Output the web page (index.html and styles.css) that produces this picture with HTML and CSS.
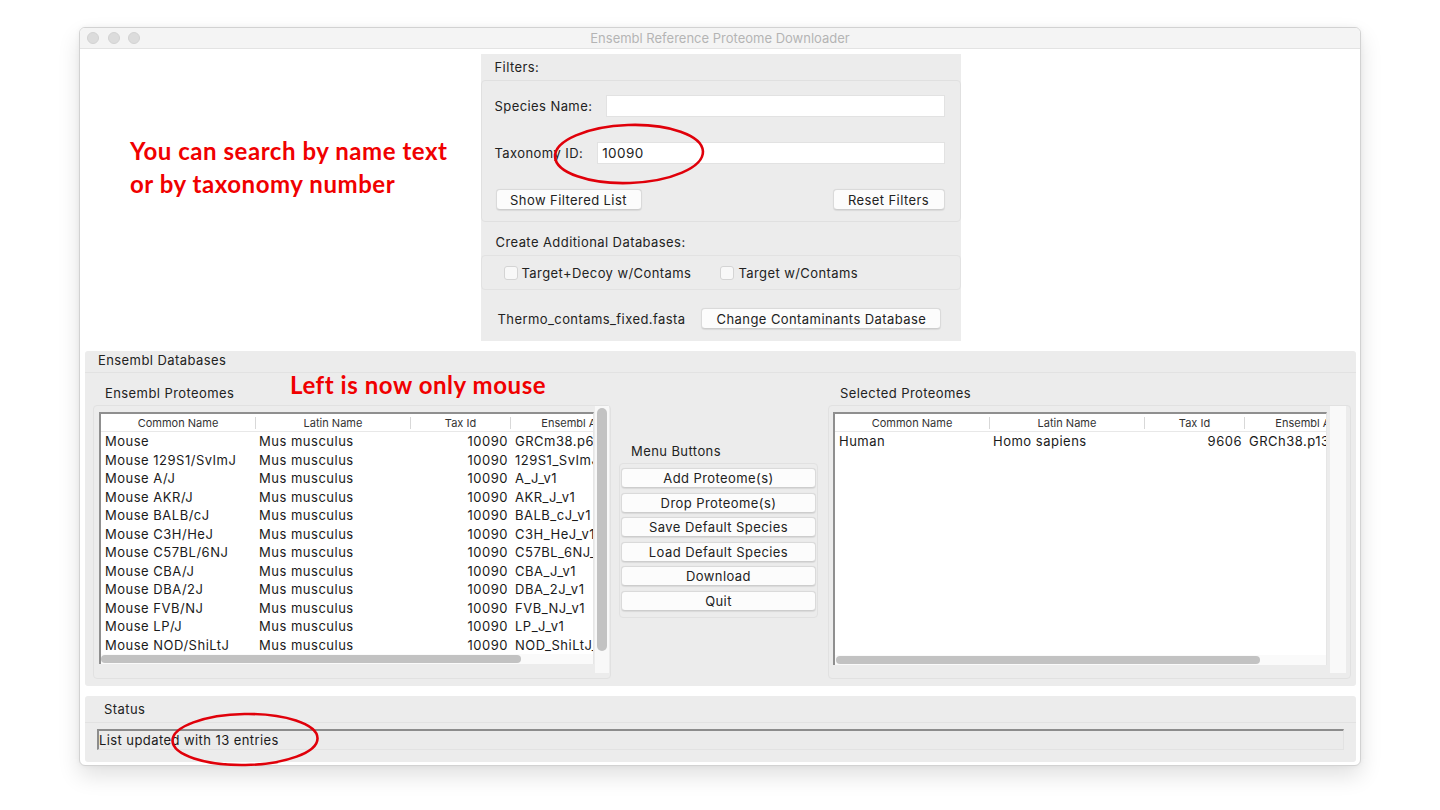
FILE: index.html
```html
<!DOCTYPE html>
<html>
<head>
<meta charset="utf-8">
<title>Ensembl Reference Proteome Downloader</title>
<link rel="stylesheet" href="styles.css">
</head>
<body>
<div class="window">
  <div class="titlebar">
    <div class="lights"><span></span><span></span><span></span></div>
    <div class="title">Ensembl Reference Proteome Downloader</div>
    <div></div>
  </div>
  <div class="content">
    <div class="top">
      <div class="note note-search">You can search by name text<br>or by taxonomy number</div>
      <div class="filters">
        <div class="f-head">Filters:</div>
        <div class="f-box">
          <div class="f-row"><span>Species Name:</span><div class="entry"></div></div>
          <div class="f-row f-row2"><span>Taxonomy ID:</span><div class="entry">10090</div></div>
          <div class="f-btns"><div class="btn btn-show">Show Filtered List</div><div class="btn btn-reset">Reset Filters</div></div>
        </div>
        <div class="f-sub">Create Additional Databases:</div>
        <div class="f-checks">
          <label class="chk"><span class="box"></span>Target+Decoy w/Contams</label>
          <label class="chk chk2"><span class="box"></span>Target w/Contams</label>
        </div>
        <div class="f-contam"><span>Thermo_contams_fixed.fasta</span><div class="btn btn-contam">Change Contaminants Database</div></div>
      </div>
      <div></div>
    </div>

    <div class="frame dbs">
      <div class="fr-head dbs-head">Ensembl Databases</div>
      <div class="dbs-body">
        <div class="group g-left">
          <div class="g-label-row"><span class="g-label g-label-left">Ensembl Proteomes</span><span class="note note-left">Left is now only mouse</span></div>
          <div class="g-frame">
            <div class="tree">
              <div class="thead"><div class="th">Common Name</div><div class="th">Latin Name</div><div class="th">Tax Id</div><div class="th">Ensembl Assembly</div></div>
              <div class="tbody">
                <div class="tr"><span>Mouse</span><span>Mus musculus</span><span class="num">10090</span><span>GRCm38.p6</span></div>
                <div class="tr"><span>Mouse 129S1/SvImJ</span><span>Mus musculus</span><span class="num">10090</span><span>129S1_SvImJ_v1</span></div>
                <div class="tr"><span>Mouse A/J</span><span>Mus musculus</span><span class="num">10090</span><span>A_J_v1</span></div>
                <div class="tr"><span>Mouse AKR/J</span><span>Mus musculus</span><span class="num">10090</span><span>AKR_J_v1</span></div>
                <div class="tr"><span>Mouse BALB/cJ</span><span>Mus musculus</span><span class="num">10090</span><span>BALB_cJ_v1</span></div>
                <div class="tr"><span>Mouse C3H/HeJ</span><span>Mus musculus</span><span class="num">10090</span><span>C3H_HeJ_v1</span></div>
                <div class="tr"><span>Mouse C57BL/6NJ</span><span>Mus musculus</span><span class="num">10090</span><span>C57BL_6NJ_v1</span></div>
                <div class="tr"><span>Mouse CBA/J</span><span>Mus musculus</span><span class="num">10090</span><span>CBA_J_v1</span></div>
                <div class="tr"><span>Mouse DBA/2J</span><span>Mus musculus</span><span class="num">10090</span><span>DBA_2J_v1</span></div>
                <div class="tr"><span>Mouse FVB/NJ</span><span>Mus musculus</span><span class="num">10090</span><span>FVB_NJ_v1</span></div>
                <div class="tr"><span>Mouse LP/J</span><span>Mus musculus</span><span class="num">10090</span><span>LP_J_v1</span></div>
                <div class="tr"><span>Mouse NOD/ShiLtJ</span><span>Mus musculus</span><span class="num">10090</span><span>NOD_ShiLtJ_v1</span></div>
              </div>
              <div class="hscroll"><div class="hthumb hthumb-left"></div></div>
            </div>
            <div class="vscroll vscroll-left"><div class="vthumb"></div></div>
          </div>
        </div>

        <div class="group g-mid">
          <div class="g-label mid-label">Menu Buttons</div>
          <div class="g-frame mid-frame">
            <div class="btn mbtn">Add Proteome(s)</div>
            <div class="btn mbtn">Drop Proteome(s)</div>
            <div class="btn mbtn">Save Default Species</div>
            <div class="btn mbtn">Load Default Species</div>
            <div class="btn mbtn">Download</div>
            <div class="btn mbtn">Quit</div>
          </div>
        </div>

        <div class="group g-right">
          <div class="g-label-row"><span class="g-label">Selected Proteomes</span></div>
          <div class="g-frame right-frame">
            <div class="tree tree-right">
              <div class="thead"><div class="th">Common Name</div><div class="th">Latin Name</div><div class="th">Tax Id</div><div class="th">Ensembl Assembly</div></div>
              <div class="tbody">
                <div class="tr"><span>Human</span><span>Homo sapiens</span><span class="num">9606</span><span>GRCh38.p13</span></div>
              </div>
              <div class="hscroll"><div class="hthumb hthumb-right"></div></div>
            </div>
            <div class="vscroll vscroll-right"></div>
          </div>
        </div>
      </div>
    </div>

    <div class="frame status">
      <div class="fr-head status-head">Status</div>
      <div class="status-body">
        <div class="status-entry">List updated with 13 entries</div>
      </div>
    </div>
  </div>
</div>

<svg class="marks" width="1440" height="810" viewBox="0 0 1440 810">
  <ellipse cx="629" cy="154" rx="74" ry="29" transform="rotate(-2 629 154)"/>
  <ellipse cx="245" cy="739.5" rx="72.5" ry="25.5" transform="rotate(-1 245 739)"/>
</svg>
</body>
</html>
```

FILE: styles.css
```css
* { box-sizing: border-box; }
html, body { margin: 0; padding: 0; }
body {
  width: 1440px;
  height: 810px;
  background: #fff;
  position: relative;
  overflow: hidden;
  font-family: Inter, "Liberation Sans", Arial, sans-serif;
  font-size: 13px;
  letter-spacing: 0.42px;
  color: #222;
}

.window {
  margin: 27px 0 0 79px;
  width: 1282px;
  height: 739px;
  border: 1px solid #d2d2d2;
  border-radius: 6px;
  background: #fff;
  box-shadow: 0 10px 22px rgba(0,0,0,0.12), 0 0 5px rgba(0,0,0,0.05);
  overflow: hidden;
  display: flex;
  flex-direction: column;
}

.titlebar {
  height: 21px;
  flex: none;
  background: #f4f4f4;
  border-bottom: 1px solid #e3e3e3;
  display: grid;
  grid-template-columns: 1fr auto 1fr;
  align-items: center;
}
.lights { display: flex; gap: 8.5px; padding-left: 7px; }
.lights span {
  width: 12px; height: 12px; border-radius: 50%;
  background: #dcdcdc;
  border: 0.5px solid #d2d2d2;
}
.title { color: #b4b4b4; font-size: 13px; letter-spacing: 0; }

.content {
  flex: 1;
  padding: 5px 4px 3px 5px;
  display: flex;
  flex-direction: column;
}

.top {
  display: grid;
  grid-template-columns: 1fr 480px 1fr;
}

.note {
  font-family: Lato, "Liberation Sans", sans-serif;
  font-weight: 700;
  color: #f00000;
  font-size: 24px;
  letter-spacing: 0.55px;
}
.note-search {
  padding: 80px 0 0 45px;
  line-height: 33px;
}

/* filters panel */
.filters {
  height: 287px;
  background: #ececec;
  display: flex;
  flex-direction: column;
}
.f-head { height: 26px; line-height: 26px; padding-left: 14px; }
.f-box {
  height: 142px;
  border: 1px solid #e0e0e0;
  border-radius: 4px;
  padding: 14px 15px 0 13px;
}
.f-row { display: flex; align-items: center; gap: 14px; height: 22px; }
.f-row2 { margin-top: 25px; }
.entry {
  flex: 1;
  height: 22px;
  background: #fff;
  border: 1px solid #e2e2e2;
  padding: 0 4px;
  line-height: 20px;
  font-size: 13.5px;
}
.f-btns {
  margin-top: 25px;
  display: flex;
  justify-content: space-between;
  padding-left: 1px;
}
.btn {
  height: 21px;
  line-height: 20px;
  background: #fcfcfc;
  border: 1px solid #dadada;
  border-bottom-color: #cdcdcd;
  border-radius: 4px;
  box-shadow: 0 0.5px 1px rgba(0,0,0,0.08);
  text-align: center;
  color: #222;
}
.btn-show { width: 146px; }
.btn-reset { width: 112px; }
.f-sub { height: 33px; padding: 6px 0 0 15px; display: flex; align-items: center; }
.f-checks {
  height: 35px;
  border: 1px solid #e2e2e2;
  border-radius: 4px;
  display: flex;
  align-items: center;
  padding-left: 22px;
}
.chk { display: flex; align-items: center; gap: 4px; }
.chk2 { margin-left: 29px; }
.box {
  width: 14px; height: 14px;
  background: #f8f8f8;
  border: 1px solid #d4d4d4;
  border-radius: 3px;
}
.f-contam {
  flex: 1;
  display: flex;
  align-items: center;
  padding: 6px 0 0 17px;
  gap: 16px;
}
.btn-contam { width: 240px; }

/* frames */
.frame {
  background: #ececec;
  border-radius: 3px;
}
.dbs { margin-top: 10px; height: 335px; display: flex; flex-direction: column; }
.fr-head { height: 21px; line-height: 19px; }
.dbs-head { padding-left: 13px; }
.dbs-body {
  flex: 1;
  border-top: 1px solid #e2e2e2;
  display: flex;
  align-items: flex-start;
  padding-left: 8px;
}
.group { display: flex; flex-direction: column; }
.g-label-row { height: 32px; display: flex; align-items: flex-start; }
.g-label { margin-top: 12px; line-height: 16px; padding-left: 12px; white-space: nowrap; }
.g-label-left { width: 197px; }
.note-left { margin: -2px 0 0 0; line-height: 28px; white-space: nowrap; }
.g-frame {
  border: 1px solid #e1e1e1;
  border-radius: 4px;
  display: flex;
  align-items: flex-start;
}
.g-left .g-frame { width: 518px; height: 274px; padding-left: 5px; }

.tree {
  width: 495px;
  height: 252px;
  margin-top: 6px;
  background: #fff;
  border-top: 2px solid #8f8f8f;
  border-left: 2px solid #8f8f8f;
  border-right: 1px solid #e6e6e6;
  display: flex;
  flex-direction: column;
  overflow: hidden;
}
.thead {
  height: 18px;
  flex: none;
  display: grid;
  grid-template-columns: 155px 155px 100px 160px;
  padding: 3px 0;
  border-bottom: 1px solid #e8e8e8;
  background: #fff;
}
.th {
  font-size: 11px;
  line-height: 12px;
  letter-spacing: 0;
  text-align: center;
  color: #333;
  border-right: 1px solid #d8d8d8;
  white-space: nowrap;
}
.tbody { flex: 1; overflow: hidden; }
.tr {
  height: 18.5px;
  display: grid;
  grid-template-columns: 155px 155px 100px 160px;
  align-items: center;
  white-space: nowrap;
  color: #1a1a1a;
  letter-spacing: 0.5px;
}
.tr span { padding-left: 3px; overflow: hidden; }
.tr span:first-child { padding-left: 4px; }
.tr .num { text-align: right; padding: 0 3px 0 0; }
.tr span:last-child { padding-left: 4px; }

.hscroll {
  height: 10px;
  flex: none;
  background: #fafafa;
  padding: 1px 0 1px 0;
}
.hthumb { height: 8px; border-radius: 4px; background: #c2c2c2; }
.hthumb-left { width: 420px; }
.hthumb-right { width: 424px; margin-left: 1px; }

.vscroll {
  width: 14px;
  height: 267px;
  margin-left: 1px;
  background: #f8f8f8;
  padding: 2px 2px 0 2px;
}
.vthumb { height: 243px; border-radius: 5px; background: #c2c2c2; }

.g-mid { margin-left: 8px; margin-top: 70px; }
.mid-label { margin: 0 0 4px 0; padding-left: 12px; }
.mid-frame {
  width: 199px;
  flex-direction: column;
  gap: 4.5px;
  padding: 4px 1px 6px 1px;
}
.mbtn { width: 195px; height: 20px; line-height: 19px; }

.g-right { margin-left: 10px; }
.right-frame { width: 523px; height: 274px; padding-left: 4px; }
.tree-right { width: 494px; height: 253px; }
.vscroll-right { width: 16px; margin-left: 3px; background: #f9f9f9; }

/* status */
.status { margin-top: 10px; height: 66px; display: flex; flex-direction: column; }
.status-head { height: 26px; line-height: 26px; padding-left: 19px; }
.status-body {
  flex: 1;
  border-top: 1px solid #e2e2e2;
  padding: 6px 12px 0 12px;
}
.status-entry {
  height: 21px;
  background: #ebebeb;
  border-top: 2px solid #8c8c8c;
  border-left: 2px solid #8c8c8c;
  border-right: 1px solid #e2e2e2;
  border-bottom: 1px solid #e2e2e2;
  line-height: 18px;
  padding-left: 0;
  color: #1a1a1a;
}

/* annotation overlay */
.marks {
  position: absolute;
  left: 0;
  top: 0;
  pointer-events: none;
}
.marks ellipse { fill: none; stroke: #e0000a; stroke-width: 2.6; }
```
